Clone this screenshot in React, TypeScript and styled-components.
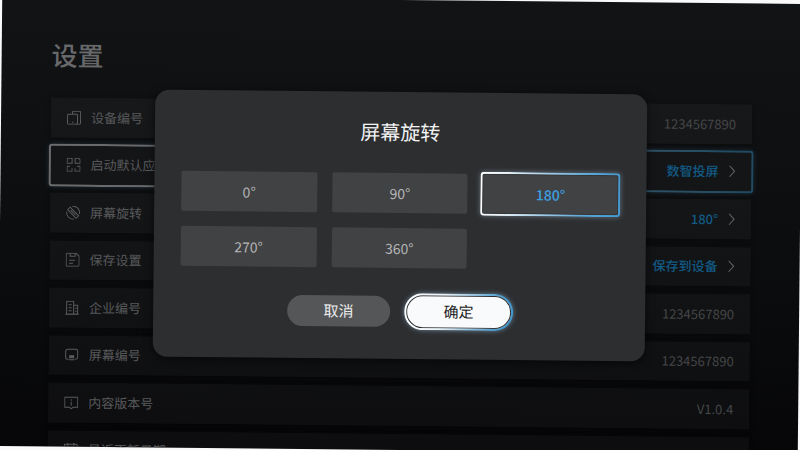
import React from "react";
import styled, { createGlobalStyle, css } from "styled-components";

const GlobalStyle = createGlobalStyle`
  *, *::before, *::after { box-sizing: border-box; }
  body {
    margin: 0;
    background: #fafafa;
    overflow: hidden;
    font-family: "Noto Sans CJK SC", "Noto Sans", sans-serif;
  }
  button { font: inherit; color: inherit; cursor: pointer; }
`;

const Screen = styled.div`
  position: relative;
  height: 100vh;
  overflow: hidden;
  background: linear-gradient(180deg, #111315 0%, #0f1012 30%, #0a0b0d 70%, #060608 100%);
  transform: rotate(0.57deg);
`;

const Page = styled.main`
  padding: 38px 49px 0 50px;
`;

const PageTitle = styled.h1`
  margin: 0 0 24px;
  font-size: 26px;
  line-height: 39px;
  font-weight: 500;
  color: #68696b;
`;

const List = styled.div`
  display: grid;
  grid-auto-rows: 1fr;
  gap: 8px;
  min-height: 372px;
`;

const rowStyle = css`
  display: flex;
  align-items: center;
  gap: 10px;
  width: 100%;
  padding: 0 16px;
  border: 0;
  background: rgba(255, 255, 255, 0.03);
  box-shadow: 0 1px 5px rgba(0, 0, 0, 0.3);
  font-size: 13px;
  line-height: 20px;
  text-align: left;
`;

const InfoRow = styled.div`
  ${rowStyle}
`;

const LinkRow = styled.button<{ $focused?: boolean }>`
  ${rowStyle}
  ${(p) =>
    p.$focused &&
    css`
      width: auto;
      margin: -2px;
      border: 2px solid transparent;
      border-radius: 4px;
      background:
        linear-gradient(#141517, #141517) padding-box,
        linear-gradient(90deg, #6b6c6e 0%, #5d666b 40%, #1f4a62 100%) border-box;
      box-shadow: 0 0 5px rgba(60, 110, 140, 0.3);
    `}
`;

const Label = styled.span`
  flex: 1;
  color: #58595b;
`;

const Value = styled.span<{ $accent?: boolean }>`
  color: ${(p) => (p.$accent ? "#125a84" : "#454648")};
  font-weight: ${(p) => (p.$accent ? 500 : 400)};
`;

const Icon = styled.svg`
  width: 14px;
  height: 14px;
  flex: none;
  fill: none;
  stroke: #5a5b5d;
  stroke-width: 1;
`;

const Chevron = styled(Icon)`
  width: 7px;
  height: 12px;
  stroke: #66676a;
`;

const Overlay = styled.div`
  position: absolute;
  inset: 0;
  display: flex;
  align-items: center;
  justify-content: center;
`;

const Dialog = styled.section`
  width: 492px;
  max-width: 100%;
  padding: 25px 28px 32px 27px;
  border-radius: 14px;
  background: #2d2e30;
  box-shadow: 0 2px 8px rgba(0, 0, 0, 0.6);
`;

const DialogTitle = styled.h2`
  margin: 0 0 26px;
  font-size: 20px;
  line-height: 30px;
  font-weight: 400;
  text-align: center;
  color: #f2f2f3;
`;

const Options = styled.div`
  display: grid;
  grid-template-columns: repeat(3, 1fr);
  grid-auto-rows: 40px;
  gap: 15px;
`;

const Option = styled.button<{ $selected?: boolean }>`
  padding: 0;
  border: 0;
  border-radius: 2px;
  background: #414244;
  font-size: 14px;
  line-height: 20px;
  color: #b4b5b6;
  ${(p) =>
    p.$selected &&
    css`
      margin: -2px;
      border: 2px solid transparent;
      border-radius: 4px;
      background:
        linear-gradient(#414244, #414244) padding-box,
        linear-gradient(100deg, #ffffff 0%, #e4eef5 20%, #5aa6d6 75%, #4398d0 100%) border-box;
      box-shadow: 0 0 5px rgba(170, 205, 230, 0.45), inset 0 0 0 1px #343537;
      color: #3b9fe2;
      font-weight: 500;
    `}
`;

const Actions = styled.div`
  display: flex;
  justify-content: center;
  gap: 17px;
  margin-top: 28px;
`;

const Action = styled.button<{ $primary?: boolean }>`
  width: 103px;
  height: 31px;
  padding: 0;
  border: 0;
  border-radius: 19px;
  background: #555658;
  font-size: 15px;
  line-height: 22px;
  color: #ececed;
  ${(p) =>
    p.$primary &&
    css`
      width: 109px;
      height: 37px;
      margin: -3px;
      border: 2px solid transparent;
      background:
        linear-gradient(#f9fafb, #f9fafb) padding-box,
        linear-gradient(100deg, #ffffff 0%, #e8f1f7 35%, #4a9ccf 85%, #3f94cb 100%) border-box;
      box-shadow: 0 0 5px rgba(150, 195, 225, 0.55), inset 0 0 0 1px #2a2d31;
      color: #1c1d1f;
    `}
`;

const icons: Record<string, React.ReactNode> = {
  device: (
    <>
      <path d="M5.5 3.5h-4a1 1 0 0 0-1 1v8a1 1 0 0 0 1 1h8a1 1 0 0 0 1-1v-8a1 1 0 0 0-1-1h-4" />
      <path d="M5.5 3.5v-2a1 1 0 0 1 1-1h6a1 1 0 0 1 1 1v11a1 1 0 0 1-1 1h-3" />
      <path d="M5 11.5h1.5" />
    </>
  ),
  apps: (
    <>
      <path d="M.5.5h5v5h-5zM8.5.5h3.500l1.500 1.500v3.500h-5zM5.500 10.500v3h-5v-5h3" />
      <path d="M10.500 8.500h3v5h-5v-3" />
    </>
  ),
  rotate: (
    <>
      <path d="M4 1.500 12.500 10 10 12.500 1.500 4zM4.500 4.500l5 5" />
      <path d="M6 .6a6.500 6.500 0 0 1 7.400 7.400M8 13.400a6.500 6.500 0 0 1-7.400-7.400" />
    </>
  ),
  save: (
    <>
      <path d="M.5 1.5a1 1 0 0 1 1-1h9l3 3v9a1 1 0 0 1-1 1h-11a1 1 0 0 1-1-1z" />
      <path d="M4.500.5v3h5v-3M3.500 7.500h6M3.500 10.500h4" />
    </>
  ),
  company: (
    <>
      <path d="M1.500.5h7v13h-7zM8.500 4.500h4v9h-4" />
      <path d="M3.500 4h3M3.500 7h3M3.500 10h3M10 7.500h1.500M10 10.500h1.500M0 13.500h14" />
    </>
  ),
  display: (
    <>
      <path d="M4 11.500H3a2 2 0 0 1-2-2v-6a2 2 0 0 1 2-2h8a2 2 0 0 1 2 2v6a2 2 0 0 1-2 2h-1" />
      <path d="M5 8h4v2H5z" fill="#5a5b5d" />
      <path d="M4.500 12h5" />
    </>
  ),
  version: (
    <>
      <path d="M.5 1.500h13v10H9l-2 1.500-2-1.500H.5z" />
      <path d="M7 3.500V5M7 6v4" />
    </>
  ),
  calendar: (
    <>
      <rect x=".5" y="1.500" width="13" height="12" rx="1" />
      <path d="M4 0v3M10 0v3M.5 5.500h13M4 8.500h6" />
    </>
  ),
};

interface Setting {
  icon: string;
  label: string;
  value: string;
  link?: boolean;
  focused?: boolean;
}

const settings: Setting[] = [
  { icon: "device", label: "设备编号", value: "1234567890" },
  { icon: "apps", label: "启动默认应用", value: "数智投屏", link: true, focused: true },
  { icon: "rotate", label: "屏幕旋转", value: "180°", link: true },
  { icon: "save", label: "保存设置", value: "保存到设备", link: true },
  { icon: "company", label: "企业编号", value: "1234567890" },
  { icon: "display", label: "屏幕编号", value: "1234567890" },
  { icon: "version", label: "内容版本号", value: "V1.0.4" },
  { icon: "calendar", label: "最近更新日期", value: "" },
];

const angles = ["0°", "90°", "180°", "270°", "360°"];

function SettingRow({ icon, label, value, link, focused }: Setting) {
  const content = (
    <>
      <Icon viewBox="0 0 14 14" aria-hidden="true">
        {icons[icon]}
      </Icon>
      <Label>{label}</Label>
      <Value $accent={link}>{value}</Value>
    </>
  );
  if (!link) return <InfoRow>{content}</InfoRow>;
  return (
    <LinkRow type="button" $focused={focused}>
      {content}
      <Chevron viewBox="0 0 7 12" aria-hidden="true">
        <path d="M1 .5 6 6 1 11.500" />
      </Chevron>
    </LinkRow>
  );
}

export default function App() {
  const [angle, setAngle] = React.useState("180°");
  return (
    <>
      <GlobalStyle />
      <Screen>
        <Page>
          <PageTitle>设置</PageTitle>
          <List>
            {settings.map((s) => (
              <SettingRow key={s.label} {...s} />
            ))}
          </List>
        </Page>
        <Overlay>
          <Dialog role="dialog" aria-modal="true" aria-labelledby="rotation-title">
            <DialogTitle id="rotation-title">屏幕旋转</DialogTitle>
            <Options>
              {angles.map((a) => (
                <Option
                  key={a}
                  type="button"
                  aria-pressed={a === angle}
                  $selected={a === angle}
                  onClick={() => setAngle(a)}
                >
                  {a}
                </Option>
              ))}
            </Options>
            <Actions>
              <Action type="button">取消</Action>
              <Action type="button" $primary>
                确定
              </Action>
            </Actions>
          </Dialog>
        </Overlay>
      </Screen>
    </>
  );
}
